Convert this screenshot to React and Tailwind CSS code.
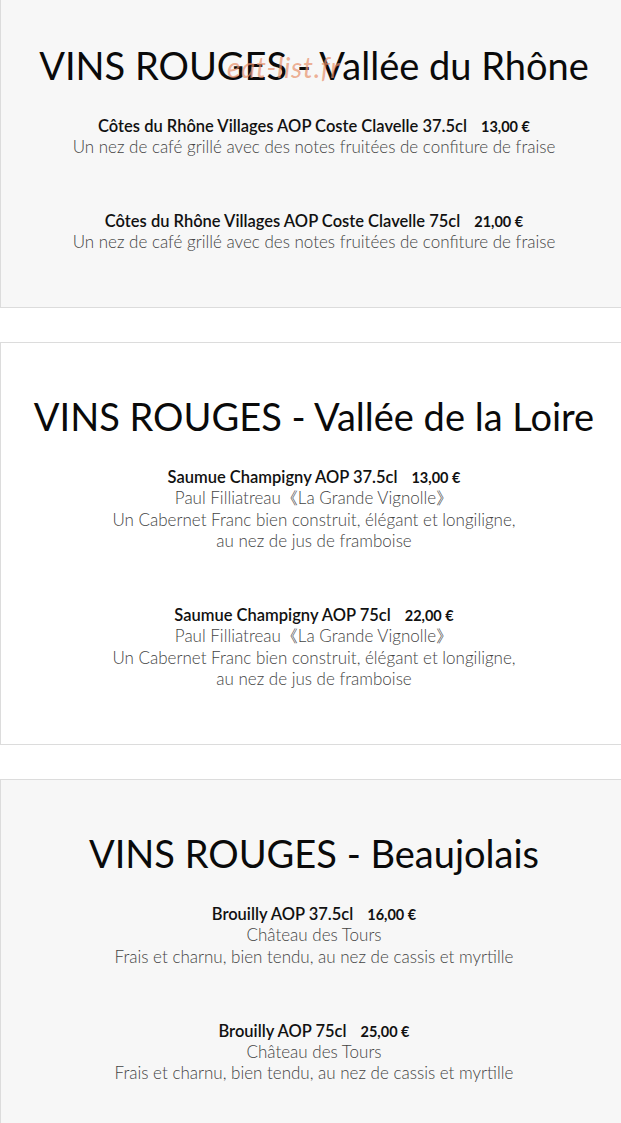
import React from 'react';

// ===== DATA =====
const sections = [
  {
    title: 'VINS ROUGES - Vallée du Rhône',
    bg: 'bg-[#f7f7f7]',
    first: true,
    items: [
      {
        name: 'Côtes du Rhône Villages AOP Coste Clavelle 37.5cl',
        price: '13,00 €',
        lines: ['Un nez de café grillé avec des notes fruitées de confiture de fraise'],
      },
      {
        name: 'Côtes du Rhône Villages AOP Coste Clavelle 75cl',
        price: '21,00 €',
        lines: ['Un nez de café grillé avec des notes fruitées de confiture de fraise'],
      },
    ],
  },
  {
    title: 'VINS ROUGES - Vallée de la Loire',
    bg: 'bg-white',
    items: [
      {
        name: 'Saumue Champigny AOP 37.5cl',
        price: '13,00 €',
        lines: [
          'Paul Filliatreau《La Grande Vignolle》',
          'Un Cabernet Franc bien construit, élégant et longiligne,',
          'au nez de jus de framboise',
        ],
      },
      {
        name: 'Saumue Champigny AOP 75cl',
        price: '22,00 €',
        lines: [
          'Paul Filliatreau《La Grande Vignolle》',
          'Un Cabernet Franc bien construit, élégant et longiligne,',
          'au nez de jus de framboise',
        ],
      },
    ],
  },
  {
    title: 'VINS ROUGES - Beaujolais',
    bg: 'bg-[#f7f7f7]',
    items: [
      {
        name: 'Brouilly AOP 37.5cl',
        price: '16,00 €',
        lines: ['Château des Tours', 'Frais et charnu, bien tendu, au nez de cassis et myrtille'],
      },
      {
        name: 'Brouilly AOP 75cl',
        price: '25,00 €',
        lines: ['Château des Tours', 'Frais et charnu, bien tendu, au nez de cassis et myrtille'],
      },
    ],
  },
];

// ===== WINE ITEM =====
const WineItem = ({ item, last }) => (
  <div className={`flex flex-col items-center ${last ? '' : 'mb-[54.5px]'}`}>
    <p className="text-[16.5px] leading-[18px] font-semibold text-[#111] whitespace-nowrap">
      {item.name}
      <span className="ml-[14px] text-[14.5px] font-bold">{item.price}</span>
    </p>
    {item.lines.map((l) => (
      <p key={l} className="text-[17px] leading-[21.5px] font-light text-[#444] whitespace-nowrap">{l}</p>
    ))}
  </div>
);

// ===== SECTION CARD =====
const Section = ({ s }) => (
  <section className={`relative ${s.bg} border border-[#dcdcdc] pt-[49px] pb-[54.5px] ${s.first ? '-mt-[9px]' : ''}`}>
    <h2 className="text-center text-[38px] leading-[48px] font-normal text-[#0a0a0a] mb-[28px]">{s.title}</h2>
    {s.items.map((it, i) => (
      <WineItem key={it.name} item={it} last={i === s.items.length - 1} />
    ))}
    {s.first && (
      <span className="absolute left-[226px] top-[54px] text-[28px] italic text-[#e8906a]/70 tracking-wide">eat-list.fr</span>
    )}
  </section>
);

export default function App() {
  return (
    <div className="w-full overflow-hidden bg-white" style={{ fontFamily: 'Lato, "Noto Sans", sans-serif' }}>
      <div className="w-[628px] flex flex-col gap-[34px]">
        {sections.map((s) => (
          <Section key={s.title} s={s} />
        ))}
      </div>
    </div>
  );
}
